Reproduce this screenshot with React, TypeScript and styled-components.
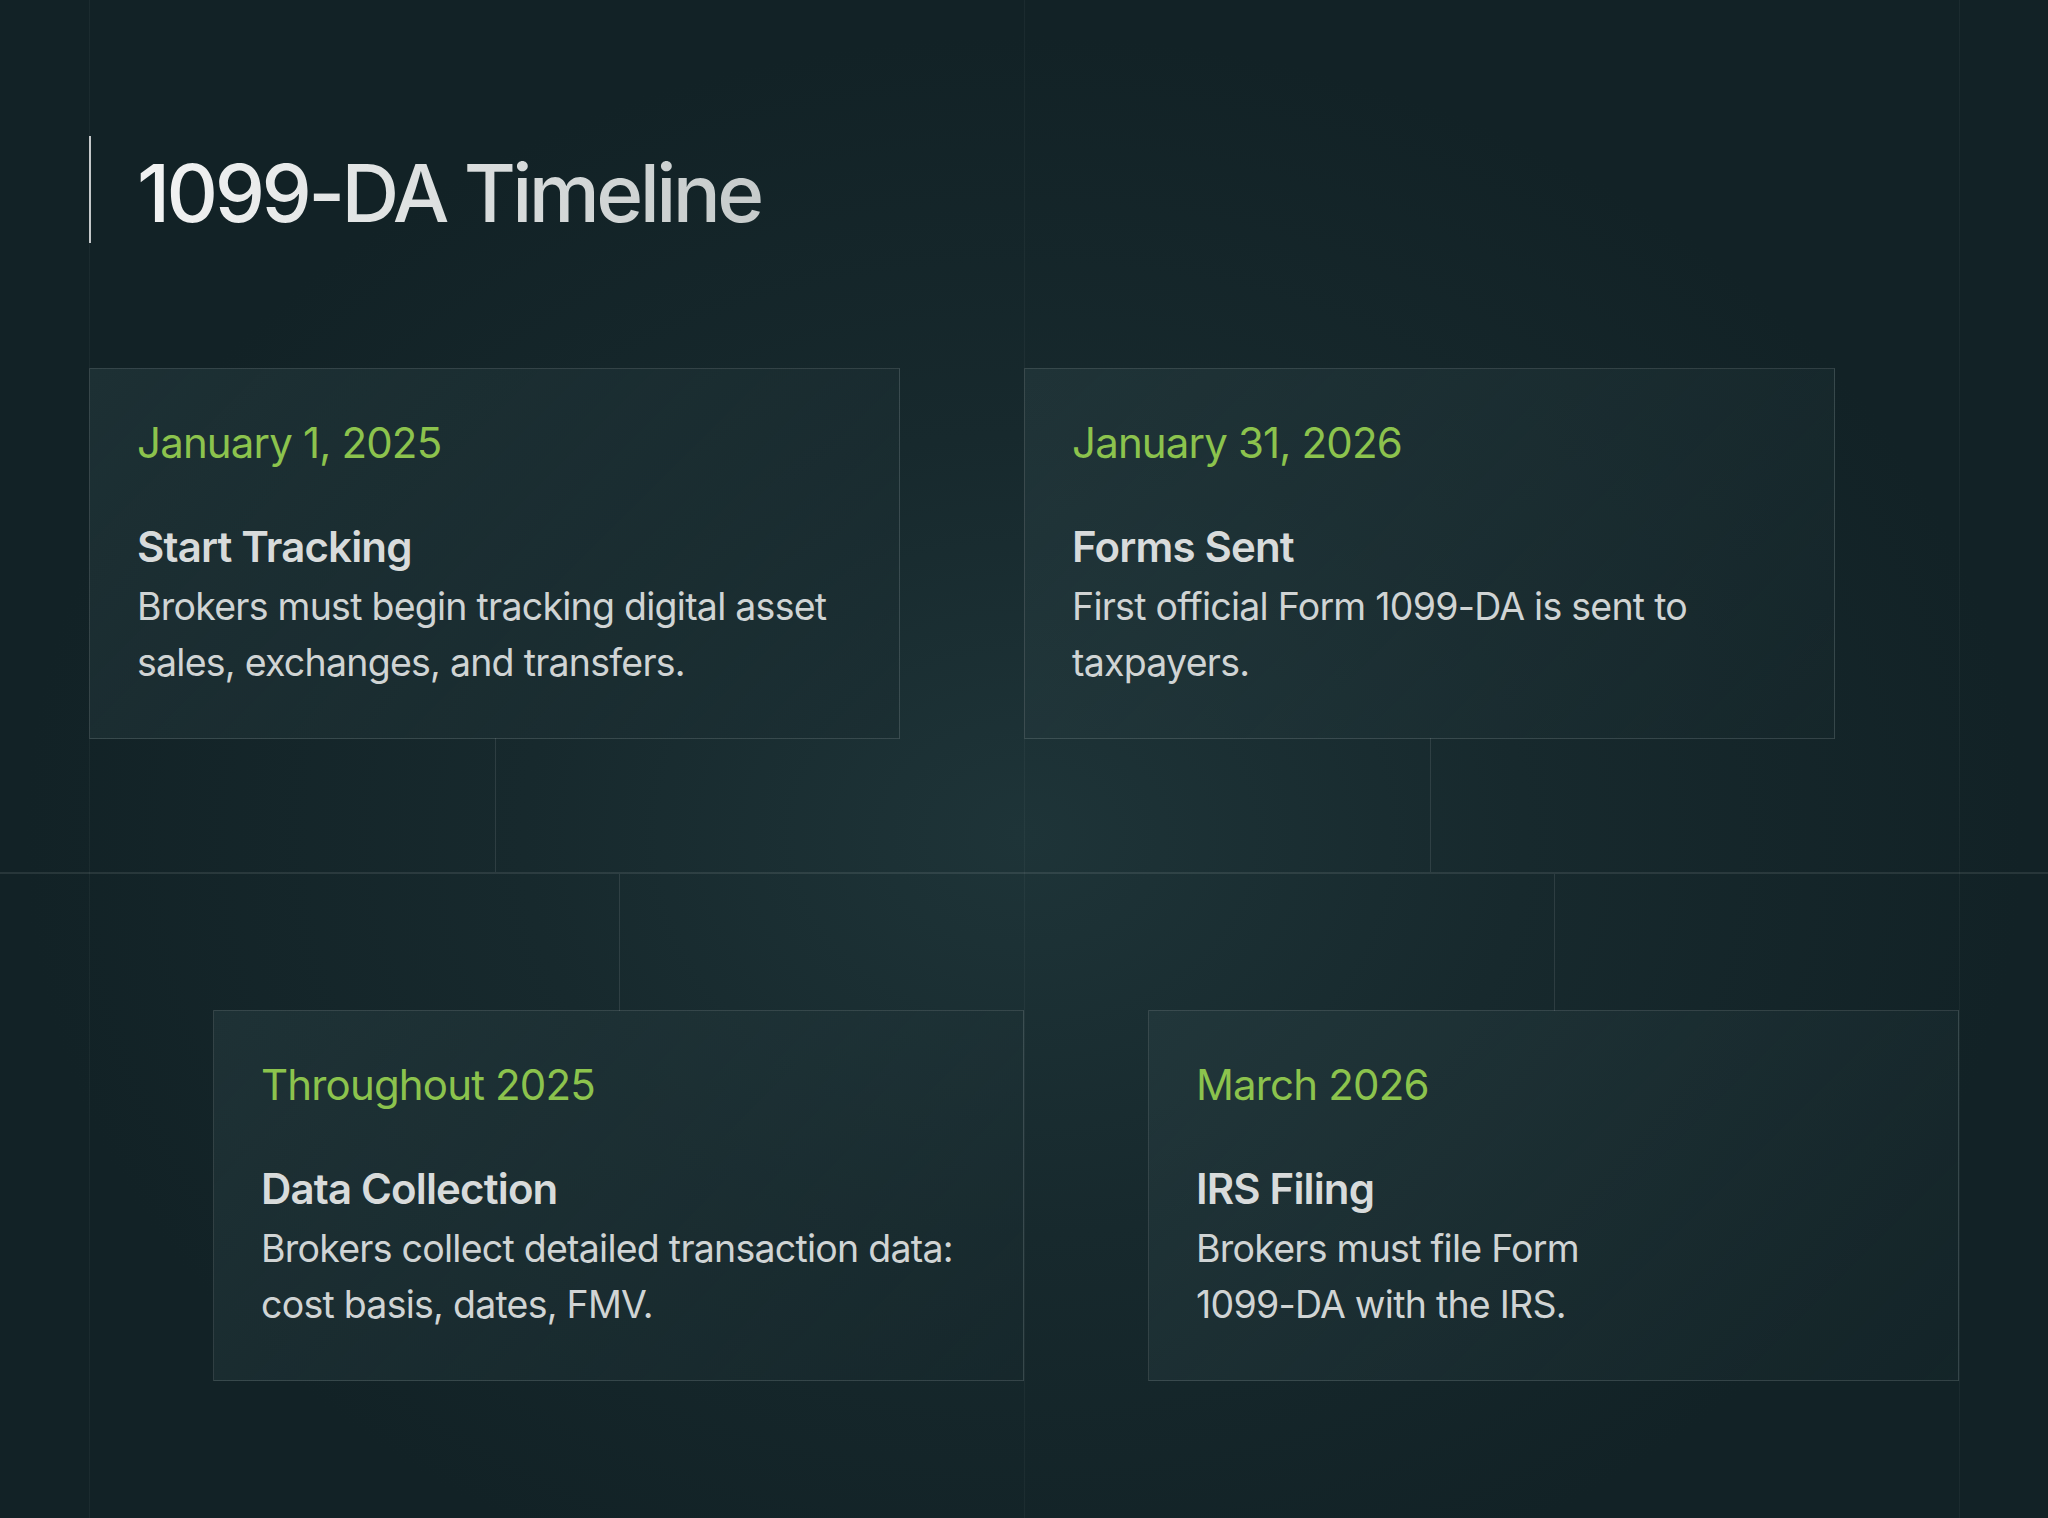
import React from "react"
import styled, { createGlobalStyle } from "styled-components"

const Global = createGlobalStyle`
  html, body { margin: 0; padding: 0; }
  body {
    background: #122428;
    font-family: Inter, "Noto Sans", sans-serif;
  }
`

const Page = styled.div`
  width: 2048px;
  height: 1518px;
  box-sizing: border-box;
  padding: 136px 0 0 89px;
  background:
    linear-gradient(rgba(255,255,255,0.09), rgba(255,255,255,0.09)) 0 872px / 100% 2px no-repeat,
    linear-gradient(rgba(255,255,255,0.04), rgba(255,255,255,0.04)) 89px 0 / 1px 100% no-repeat,
    linear-gradient(rgba(255,255,255,0.04), rgba(255,255,255,0.04)) 1024px 0 / 1px 100% no-repeat,
    linear-gradient(rgba(255,255,255,0.04), rgba(255,255,255,0.04)) 1959px 0 / 1px 100% no-repeat,
    radial-gradient(ellipse 1000px 800px at 50% 55%, #1e3438 0%, #17292d 50%, #122226 100%);
  overflow: hidden;
`

const Header = styled.div`
  height: 107px;
  border-left: 2px solid rgba(255,255,255,0.75);
  padding-left: 46px;
  display: flex;
  align-items: center;
`

const Title = styled.h1`
  margin: 6px 0 0;
  font-size: 80px;
  font-weight: 500;
  letter-spacing: -0.045em;
  background: linear-gradient(90deg, #f2f3f3 0%, #c6cbcb 100%);
  -webkit-background-clip: text;
  background-clip: text;
  color: transparent;
`

const Row = styled.div<{ $offset: number; $top: number }>`
  display: grid;
  grid-template-columns: 811px 811px;
  column-gap: 124px;
  margin-left: ${p => p.$offset}px;
  margin-top: ${p => p.$top}px;
`

const Card = styled.div<{ $link: "down" | "up" }>`
  position: relative;
  box-sizing: border-box;
  height: 371px;
  padding: 50px 47px;
  border: 1.5px solid rgba(255,255,255,0.12);
  background: linear-gradient(135deg, rgba(40,62,66,0.5) 0%, rgba(24,42,46,0.3) 100%);
  &::after {
    content: "";
    position: absolute;
    left: 50%;
    width: 1.5px;
    background: rgba(255,255,255,0.1);
    ${p => p.$link === "down" ? "top: 100%; height: 134px;" : "bottom: 100%; height: 137px;"}
  }
`

const DateText = styled.div`
  color: #8cc34d;
  font-size: 42px;
  line-height: 48px;
  letter-spacing: -0.02em;
`

const Heading = styled.h3`
  margin: 52px 0 0;
  color: #d8dbdb;
  font-size: 42px;
  line-height: 56px;
  font-weight: 600;
  letter-spacing: -0.02em;
`

const Body = styled.p`
  margin: 4px 0 0;
  color: #d0d4d4;
  font-size: 37.5px;
  line-height: 56px;
  letter-spacing: -0.02em;
`

type Item = { date: string; title: string; text: React.ReactNode }

const top: Item[] = [
  { date: "January 1, 2025", title: "Start Tracking", text: <>Brokers must begin tracking digital asset<br />sales, exchanges, and transfers.</> },
  { date: "January 31, 2026", title: "Forms Sent", text: <>First official Form 1099-DA is sent to<br />taxpayers.</> },
]
const bottom: Item[] = [
  { date: "Throughout 2025", title: "Data Collection", text: <>Brokers collect detailed transaction data:<br />cost basis, dates, FMV.</> },
  { date: "March 2026", title: "IRS Filing", text: <>Brokers must file Form<br />1099-DA with the IRS.</> },
]

export default function App() {
  return (
    <Page>
      <Global />
      <Header>
        <Title>1099-DA Timeline</Title>
      </Header>
      <Row $offset={0} $top={125}>
        {top.map(item => (
          <Card key={item.date} $link="down">
            <DateText>{item.date}</DateText>
            <Heading>{item.title}</Heading>
            <Body>{item.text}</Body>
          </Card>
        ))}
      </Row>
      <Row $offset={124} $top={271}>
        {bottom.map(item => (
          <Card key={item.date} $link="up">
            <DateText>{item.date}</DateText>
            <Heading>{item.title}</Heading>
            <Body>{item.text}</Body>
          </Card>
        ))}
      </Row>
    </Page>
  )
}
